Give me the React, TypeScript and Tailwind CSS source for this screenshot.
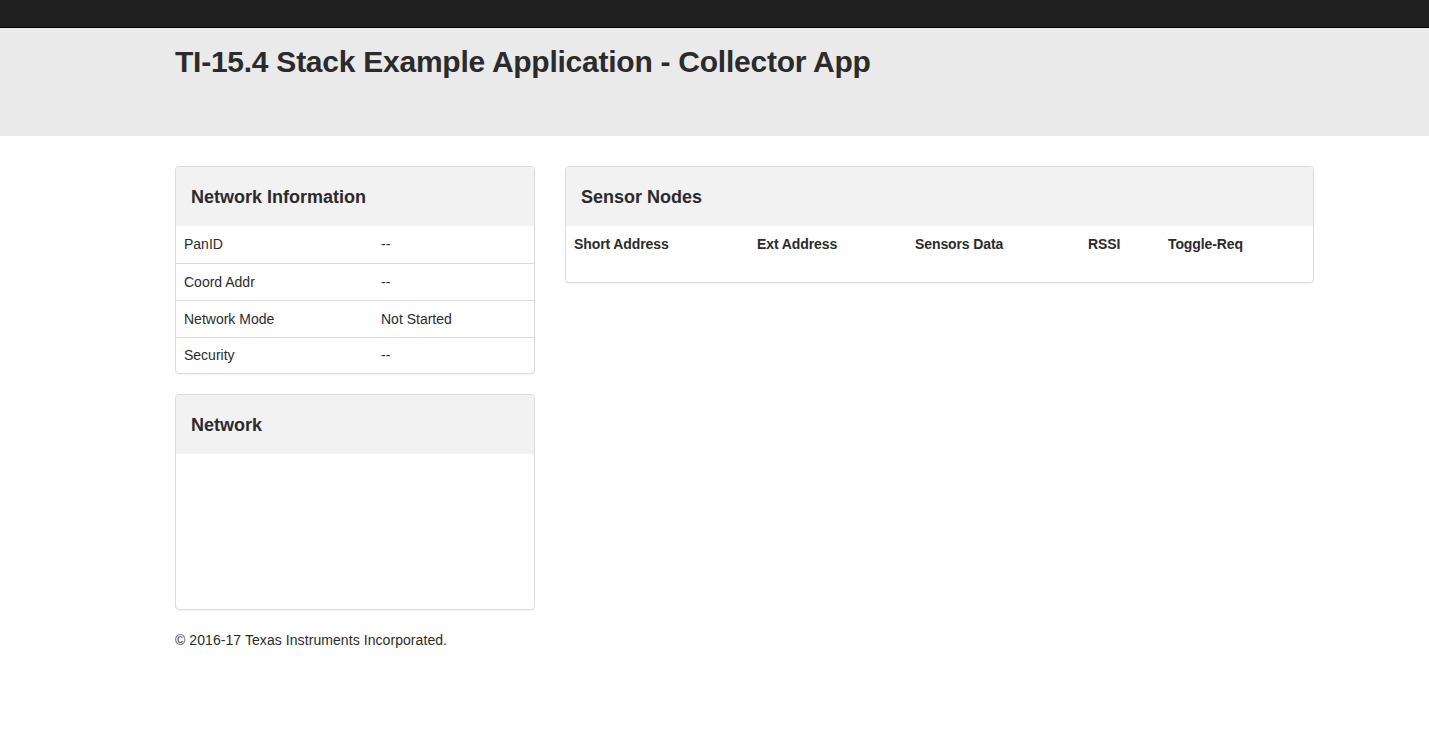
const font = { fontFamily: '"Liberation Sans", Arial, sans-serif' };

const info: [string, string][] = [
  ["PanID", "--"],
  ["Coord Addr", "--"],
  ["Network Mode", "Not Started"],
  ["Security", "--"],
];

const sensorCols = [
  { label: "Short Address", w: "w-[183px]" },
  { label: "Ext Address", w: "w-[158px]" },
  { label: "Sensors Data", w: "w-[173px]" },
  { label: "RSSI", w: "w-[80px]" },
  { label: "Toggle-Req", w: "flex-1" },
];

function PanelHeading({ title }: { title: string }) {
  return (
    <div className="h-[59px] bg-[#f2f2f2] rounded-t-[4px] px-[15px] pt-[1px] flex items-center">
      <h3 className="text-[18px] font-bold text-[#2b2b2b]">{title}</h3>
    </div>
  );
}

export default function App() {
  return (
    <div className="min-h-screen bg-white text-[#2b2b2b]" style={font}>
      {/* Navbar */}
      <div className="h-[28px] bg-[#202020] border-b border-black" />

      {/* Jumbotron */}
      <div className="h-[108px] bg-[#eaeaea] pl-[175px] pt-[16px]">
        <h1 className="text-[30px] leading-[36px] font-bold tracking-[-0.25px] text-[#2b2b2b]">
          TI-15.4 Stack Example Application - Collector App
        </h1>
      </div>

      <div className="pl-[175px] pt-[30px] flex gap-[30px] items-start">
        {/* Left column */}
        <div className="w-[360px] flex flex-col gap-[20px]">
          <div className="border border-[#dcdcdc] rounded-[4px] shadow-[0_1px_1px_rgba(0,0,0,0.05)]">
            <PanelHeading title="Network Information" />
            <div className="text-[14px]">
              {info.map(([k, v], i) => (
                <div
                  key={k}
                  className={`flex items-center px-[8px] ${i > 0 ? "border-t border-[#dcdcdc]" : ""} ${i === 3 ? "h-[36px]" : "h-[37px]"}`}
                >
                  <div className="w-[197px]">{k}</div>
                  <div>{v}</div>
                </div>
              ))}
            </div>
          </div>

          <div className="border border-[#dcdcdc] rounded-[4px] shadow-[0_1px_1px_rgba(0,0,0,0.05)]">
            <PanelHeading title="Network" />
            <div className="h-[155px]" />
          </div>

          <p className="text-[14px] tracking-[0.07px]">© 2016-17 Texas Instruments Incorporated.</p>
        </div>

        {/* Right column */}
        <div className="w-[749px] border border-[#dcdcdc] rounded-[4px] shadow-[0_1px_1px_rgba(0,0,0,0.05)]">
          <PanelHeading title="Sensor Nodes" />
          <div className="flex px-[8px] h-[37px] items-center text-[14px] font-bold tracking-[-0.1px]">
            {sensorCols.map((c) => (
              <div key={c.label} className={c.w}>
                {c.label}
              </div>
            ))}
          </div>
          <div className="h-[19px]" />
        </div>
      </div>
    </div>
  );
}
